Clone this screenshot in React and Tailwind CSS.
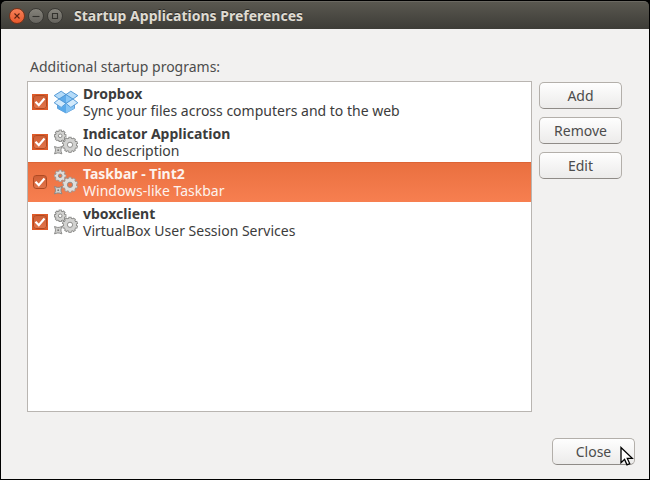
import React, { useState } from 'react';

const PROGRAMS = [
  { id: 'dropbox', name: 'Dropbox', description: 'Sync your files across computers and to the web', icon: 'dropbox' },
  { id: 'indicator', name: 'Indicator Application', description: 'No description', icon: 'gears' },
  { id: 'tint2', name: 'Taskbar - Tint2', description: 'Windows-like Taskbar', icon: 'gears' },
  { id: 'vbox', name: 'vboxclient', description: 'VirtualBox User Session Services', icon: 'gears' },
];

function DropboxIcon() {
  return (
    <svg width="26" height="26" viewBox="0 0 26 26" className="shrink-0" aria-hidden="true">
      <path d="M4.5 14 13 9l8.5 5v5.4L13 24l-8.5-4.6z" fill="#7dbdf0" stroke="#4a8fd0" strokeWidth=".8" />
      <path d="M13 4.5 20.5 10 13 14.500 5.500 10z" fill="#5fabea" />
      <path d="M13 5.500 19.500 10 13 14z" fill="#8ac6f5" />
      <path d="M8.2 2.2 13 5.6 6 10 1.2 6.6z" fill="#b4dbf9" stroke="#4b93d3" strokeWidth=".9" />
      <path d="M17.8 2.2 13 5.6 20 10l4.8-3.4z" fill="#b4dbf9" stroke="#4b93d3" strokeWidth=".9" />
      <path d="M6 10l7 4.400-4.800 4L1.200 13.800z" fill="#d2eafc" stroke="#4b93d3" strokeWidth=".9" />
      <path d="M20 10l-7 4.400 4.800 4 7-4.600z" fill="#d2eafc" stroke="#4b93d3" strokeWidth=".9" />
      <path d="M13 15v9l-8-4.500v-2.600l3.200 2z" fill="#5aaaea" />
      <path d="M13 15v9l8-4.500v-2.600l-3.200 2z" fill="#86c4f4" />
    </svg>
  );
}

function Gear({ cx, cy, body, tooth, hole, teeth }) {
  const angles = Array.from({ length: teeth }, (_, i) => (360 / teeth) * i);
  const cog = (extra) => (
    <>
      <circle cx={cx} cy={cy} r={body + extra} />
      {angles.map((a) => (
        <rect
          key={a}
          x={cx - 1.2 - extra}
          y={cy - tooth - extra}
          width={2.4 + extra * 2}
          height={tooth}
          transform={`rotate(${a} ${cx} ${cy})`}
        />
      ))}
    </>
  );
  return (
    <g>
      <g className="fill-[#858583] group-data-[selected=true]:fill-[#a8978f]">{cog(0.4)}</g>
      <g className="fill-[#d2d2d0] group-data-[selected=true]:fill-[#dededc]">{cog(-0.4)}</g>
      <circle cx={cx} cy={cy} r={hole} className="fill-white group-data-[selected=true]:fill-[#ef7445]" stroke="#8e8e8c" strokeWidth="1" />
    </g>
  );
}

function GearsIcon() {
  return (
    <svg width="26" height="26" viewBox="0 0 26 26" className="shrink-0" aria-hidden="true">
      <Gear cx={7.2} cy={6.8} body={4.8} tooth={5.8} hole={1.8} teeth={8} />
      <Gear cx={17} cy={15.8} body={6.6} tooth={7.6} hole={2.6} teeth={10} />
      <path d="M1.500 17.500 4.200 18.400h2L8.900 17.500l-.9 2.700v2l.9 2.700-2.700-.9h-2l-2.700.9.9-2.700v-2z" fill="#cfcfcd" stroke="#858583" strokeWidth=".9" />
      <circle cx="5.2" cy="21.200" r=".9" fill="#7b7b79" />
    </svg>
  );
}

function ProgramRow({ program, selected, checked, onSelect, onToggle }) {
  return (
    <li
      data-selected={selected}
      onClick={onSelect}
      className="group flex h-10 items-center pl-1 text-[#3c3c3c] data-[selected=true]:bg-linear-to-b data-[selected=true]:from-[#e96f3f] data-[selected=true]:to-[#f77f50] data-[selected=true]:text-[#fdf3ee] data-[selected=true]:shadow-[inset_0_1px_0_#dd6435]"
    >
      <span className="grid size-4 shrink-0 place-items-center bg-[#e05a28] group-data-[selected=true]:bg-transparent">
        <input
          id={program.id}
          type="checkbox"
          checked={checked}
          onChange={onToggle}
          className="peer col-start-1 row-start-1 size-3.5 appearance-none rounded-[3px] border border-[#b04a22] bg-white checked:bg-linear-to-b checked:from-[#cf5f35] checked:to-[#e2744a]"
        />
        <svg width="14" height="14" viewBox="0 0 14 14" className="pointer-events-none z-10 col-start-1 row-start-1 hidden peer-checked:block" aria-hidden="true">
          <path d="M2.5 6.8 5.8 10.200 11.500 3.500" fill="none" stroke="#fff" strokeWidth="2.2" />
        </svg>
      </span>
      <span className="ml-[5px] flex">{program.icon === 'dropbox' ? <DropboxIcon /> : <GearsIcon />}</span>
      <label htmlFor={program.id} className="ml-1 min-w-0 text-sm leading-[17px] whitespace-nowrap">
        <span className="block font-bold">{program.name}</span>
        <span className="block">{program.description}</span>
      </label>
    </li>
  );
}

function PushButton({ children }) {
  return (
    <button
      type="button"
      className="h-[27px] w-[83px] rounded-[5px] border border-[#b3afaa] border-b-[#8f8b87] bg-linear-to-b from-[#fefefe] to-[#ecebea] text-sm leading-[17px] text-[#4c4c4c]"
    >
      {children}
    </button>
  );
}

function WindowControl({ label, close, children }) {
  return (
    <button
      type="button"
      aria-label={label}
      data-close={close}
      className="flex size-4 items-center justify-center rounded-full border border-[#3a3935] bg-linear-to-b from-[#85837b] to-[#66645e] text-[#33322e] data-[close=true]:border-[#7a3219] data-[close=true]:from-[#f58058] data-[close=true]:to-[#e8582a] data-[close=true]:text-[#5a2312]"
    >
      <svg width="14" height="14" viewBox="0 0 14 14" fill="none" stroke="currentColor" strokeWidth="1.1" className="shrink-0" aria-hidden="true">
        {children}
      </svg>
    </button>
  );
}

export default function App() {
  const [selected, setSelected] = useState('tint2');
  const [enabled, setEnabled] = useState(PROGRAMS.map((p) => p.id));
  const toggle = (id) =>
    setEnabled((ids) => (ids.includes(id) ? ids.filter((x) => x !== id) : [...ids, id]));

  return (
    <div className="min-h-screen bg-black font-['Noto_Sans','Open_Sans',sans-serif]">
      <div className="flex min-h-screen flex-col border border-black">
        <header className="flex h-7 shrink-0 items-center rounded-t-[5px] border-t border-[#6b6962] bg-linear-to-b from-[#5a5850] to-[#3d3c37] pl-2">
          <div className="flex gap-[3px]">
            <WindowControl label="Close window" close>
              <path d="M4.5 4.5l5 5M9.5 4.5l-5 5" />
            </WindowControl>
            <WindowControl label="Minimize">
              <path d="M3.5 7.5h7" />
            </WindowControl>
            <WindowControl label="Maximize">
              <path d="M4.5 4.5h5v5h-5z" />
            </WindowControl>
          </div>
          <h1 className="ml-[11px] text-sm leading-[17px] font-bold text-[#dfdbd2] text-shadow-[0_-1px_0_#2c2b28]">
            Startup Applications Preferences
          </h1>
        </header>

        <main className="flex flex-1 flex-col bg-[#f2f1f0] pt-7 pr-3.5 pb-3.5 pl-[26px]">
          <h2 id="programs" className="mb-1 ml-[3px] text-sm leading-5 text-[#4c4c4c]">
            Additional startup programs:
          </h2>
          <div className="flex flex-1 gap-[7px] pr-[13px]">
            <ul aria-labelledby="programs" className="min-w-0 flex-1 border border-[#b9b5b1] bg-white">
              {PROGRAMS.map((p) => (
                <ProgramRow
                  key={p.id}
                  program={p}
                  selected={selected === p.id}
                  checked={enabled.includes(p.id)}
                  onSelect={() => setSelected(p.id)}
                  onToggle={() => toggle(p.id)}
                />
              ))}
            </ul>
            <div className="flex flex-col gap-2 pt-px">
              <PushButton>Add</PushButton>
              <PushButton>Remove</PushButton>
              <PushButton>Edit</PushButton>
            </div>
          </div>
          <div className="mt-[26px] flex justify-end">
            <div className="relative flex">
              <PushButton>Close</PushButton>
              <svg width="14" height="21" viewBox="0 0 14 21" className="pointer-events-none absolute top-2 right-px" aria-hidden="true">
                <path d="M1 1.5v15.3l3.6-3.4 2.4 5.4 2.7-1.2-2.4-5.2h5z" fill="#fff" stroke="#000" strokeWidth="1.3" />
              </svg>
            </div>
          </div>
        </main>
      </div>
    </div>
  );
}
